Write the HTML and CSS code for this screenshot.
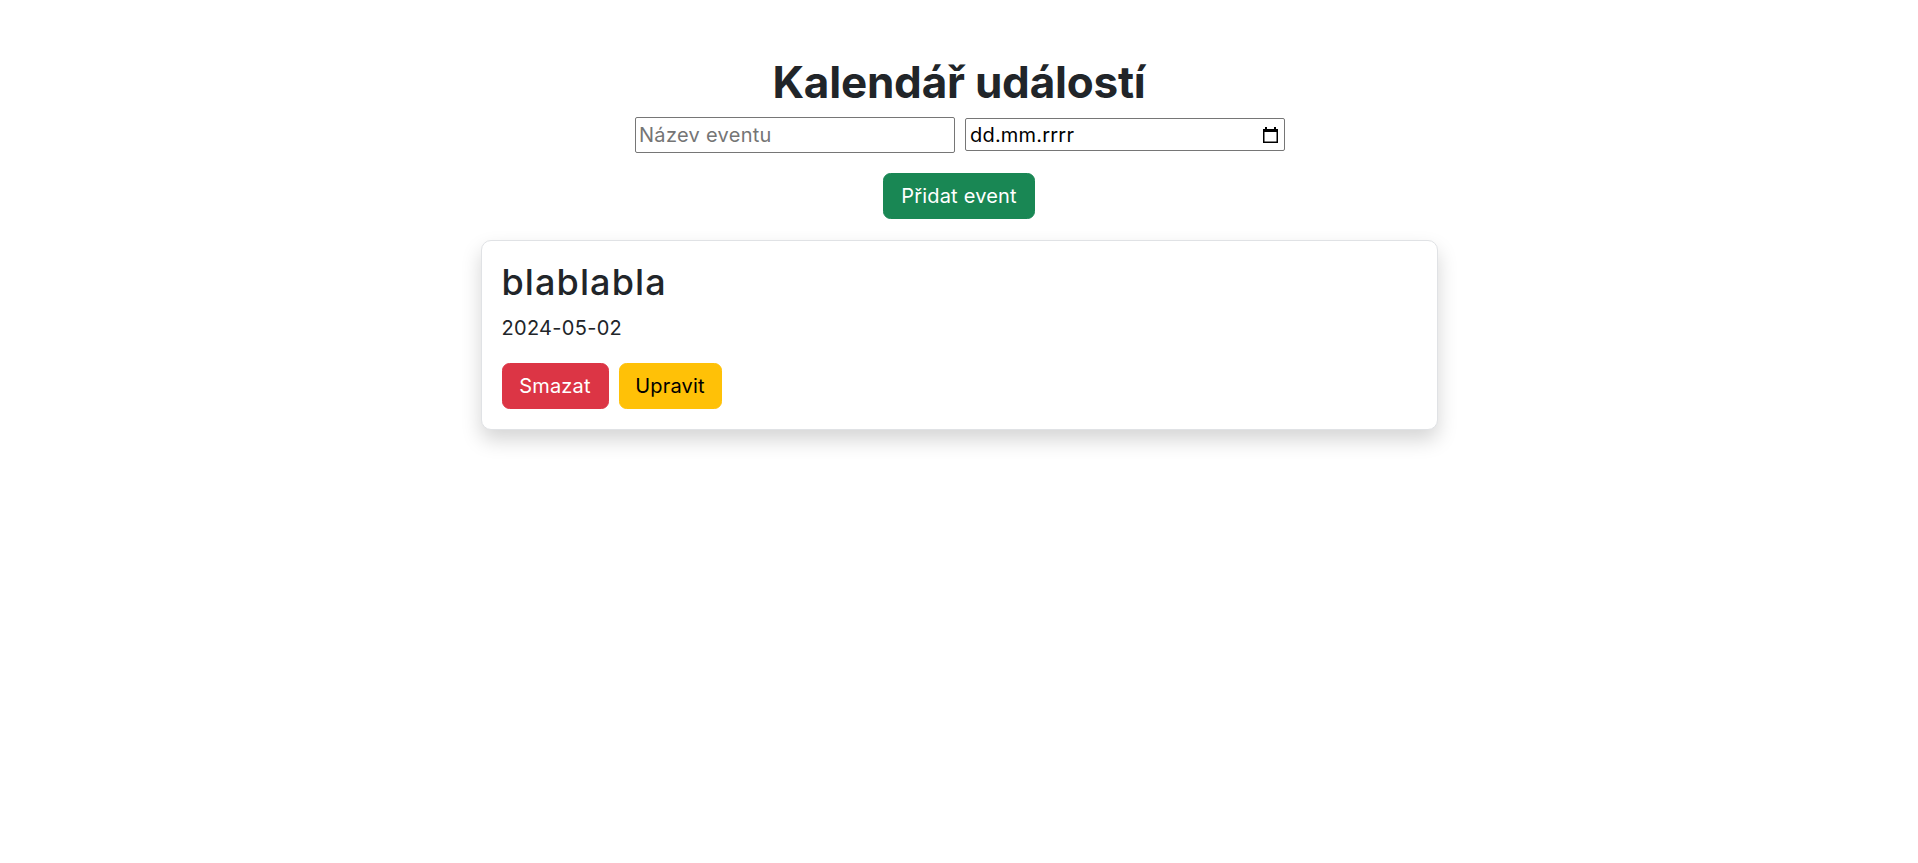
FILE: index.html
```html
<!DOCTYPE html>
<html lang="cs">
<head>
<meta charset="utf-8">
<title>Kalendář událostí</title>
<link rel="stylesheet" href="styles.css">
</head>
<body>
<main class="page">
  <h1 class="page-title">Kalendář událostí</h1>
  <form class="event-form">
    <div class="field-row">
      <input class="text-field" type="text" placeholder="Název eventu">
      <div class="date-field">
        <span class="date-text">dd.mm.rrrr</span>
        <svg class="cal-icon" viewBox="0 0 15 16" width="15" height="16" aria-hidden="true">
          <rect x="2" y="0" width="2" height="3" fill="#000"/>
          <rect x="11" y="0" width="2" height="3" fill="#000"/>
          <rect x="0" y="2" width="15" height="3" fill="#000"/>
          <rect x="0.75" y="2.75" width="13.5" height="12.5" fill="none" stroke="#000" stroke-width="1.5"/>
        </svg>
      </div>
    </div>
    <button class="btn btn-success" type="button">Přidat event</button>
  </form>
  <section class="card">
    <h3 class="card-title">blablabla</h3>
    <p class="card-date">2024-05-02</p>
    <div class="card-actions">
      <button class="btn btn-danger btn-delete" type="button">Smazat</button>
      <button class="btn btn-warning btn-edit" type="button">Upravit</button>
    </div>
  </section>
</main>
</body>
</html>
```

FILE: styles.css
```css
* { box-sizing: border-box; }

html, body {
  margin: 0;
  padding: 0;
  background: #fff;
  min-height: 100%;
}

body {
  font-family: "Inter", "Open Sans", sans-serif;
  color: #212529;
}

.page {
  display: flex;
  flex-direction: column;
  align-items: center;
  padding-top: 52px;
  min-height: 100vh;
}

.page-title {
  margin: 0;
  font-size: 44px;
  font-weight: 700;
  line-height: 60px;
  height: 60px;
  color: #212529;
  letter-spacing: -0.2px;
}

.event-form {
  display: flex;
  flex-direction: column;
  align-items: center;
  margin-top: 5px;
}

.field-row {
  display: flex;
  align-items: flex-start;
  gap: 10px;
  padding-left: 2px;
}

.text-field {
  width: 320px;
  height: 36px;
  margin: 0;
  padding: 0 3px;
  border: 1px solid #767676;
  border-radius: 2px;
  font-family: inherit;
  font-size: 20px;
  letter-spacing: 0.3px;
  color: #000;
  background: #fff;
}

.text-field::placeholder {
  color: #757575;
}

.date-field {
  width: 320px;
  height: 33px;
  margin-top: 1px;
  padding: 0 6px 0 4px;
  border: 1px solid #767676;
  border-radius: 2px;
  display: flex;
  align-items: center;
  justify-content: space-between;
  font-size: 20px;
  letter-spacing: 0.2px;
  color: #000;
  background: #fff;
}

.date-text {
  line-height: 30px;
}

.cal-icon {
  display: block;
  margin-top: 1px;
}

.btn {
  display: inline-flex;
  align-items: center;
  justify-content: center;
  height: 46px;
  padding: 0 15px;
  border: 1px solid transparent;
  border-radius: 7.5px;
  font-family: inherit;
  font-size: 20px;
  font-weight: 400;
  line-height: 30px;
  letter-spacing: 0.2px;
  cursor: pointer;
}

.btn-success {
  margin-top: 20px;
  width: 152px;
  background: #198754;
  border-color: #198754;
  color: #fff;
}

.card {
  margin-top: 21px;
  width: 957px;
  padding: 20px;
  border: 1px solid #e0e2e5;
  border-radius: 10px;
  background: #fff;
  box-shadow: 0 10px 20px rgba(0, 0, 0, 0.17);
}

.card-title {
  margin: 0 0 10px;
  font-size: 36px;
  font-weight: 500;
  line-height: 42px;
  letter-spacing: 1.1px;
  color: #212529;
}

.card-date {
  margin: 0 0 20px;
  font-size: 20px;
  line-height: 30px;
  letter-spacing: 0.3px;
  color: #212529;
}

.card-actions {
  display: flex;
  gap: 10px;
}

.btn-danger {
  width: 107px;
  background: #dc3545;
  border-color: #dc3545;
  color: #fff;
}

.btn-warning {
  width: 103px;
  background: #ffc107;
  border-color: #ffc107;
  color: #000;
}
```
